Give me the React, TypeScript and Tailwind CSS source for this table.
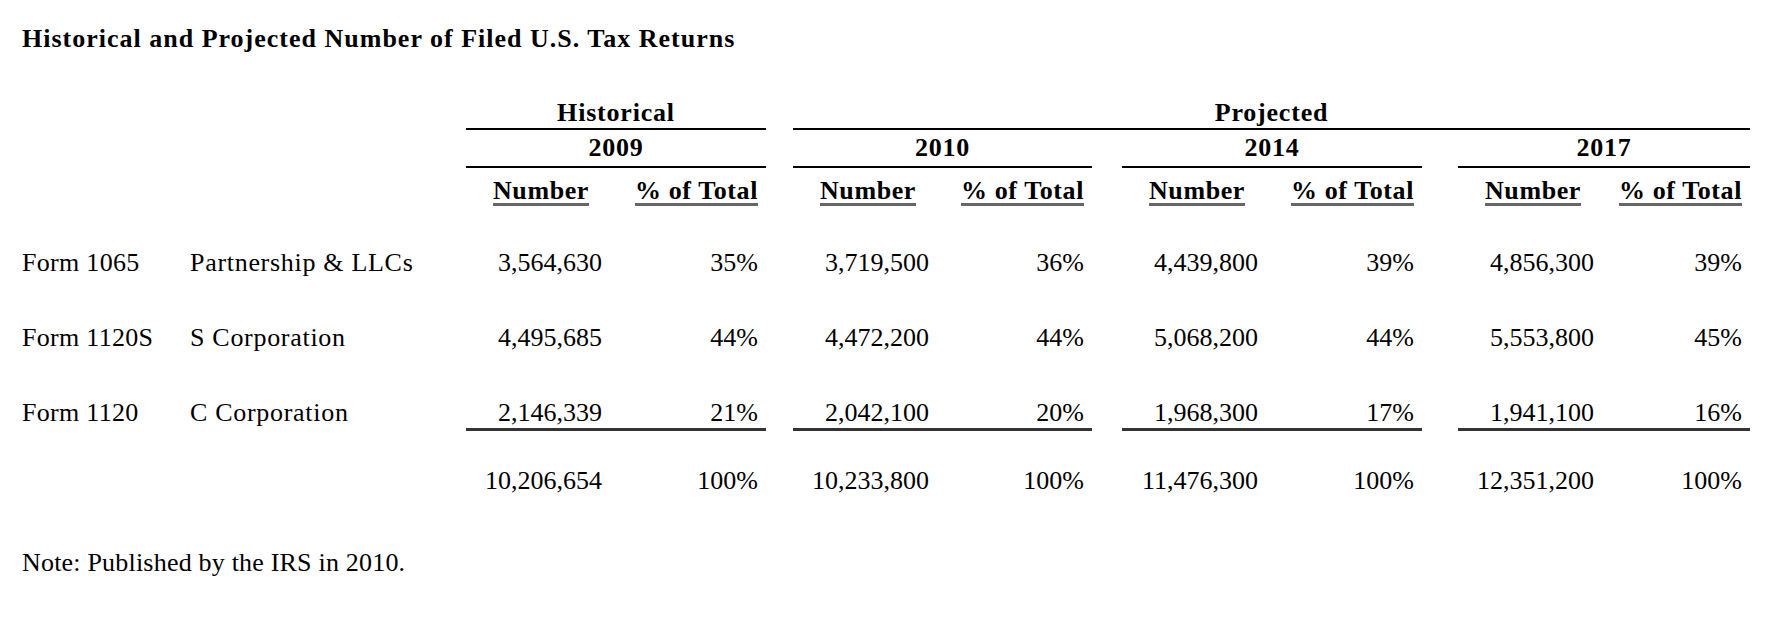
import React from "react";

type Group = {
  year: string;
  width: string;
  margin: string;
  cells: [string, string][];
  total: [string, string];
};

const groups: Group[] = [
  {
    year: "2009",
    width: "w-[300px]",
    margin: "ml-0",
    cells: [
      ["3,564,630", "35%"],
      ["4,495,685", "44%"],
      ["2,146,339", "21%"],
    ],
    total: ["10,206,654", "100%"],
  },
  {
    year: "2010",
    width: "w-[299px]",
    margin: "ml-[27px]",
    cells: [
      ["3,719,500", "36%"],
      ["4,472,200", "44%"],
      ["2,042,100", "20%"],
    ],
    total: ["10,233,800", "100%"],
  },
  {
    year: "2014",
    width: "w-[300px]",
    margin: "ml-[30px]",
    cells: [
      ["4,439,800", "39%"],
      ["5,068,200", "44%"],
      ["1,968,300", "17%"],
    ],
    total: ["11,476,300", "100%"],
  },
  {
    year: "2017",
    width: "w-[292px]",
    margin: "ml-[36px]",
    cells: [
      ["4,856,300", "39%"],
      ["5,553,800", "45%"],
      ["1,941,100", "16%"],
    ],
    total: ["12,351,200", "100%"],
  },
];

const rows = [
  { form: "Form 1065", desc: "Partnership & LLCs" },
  { form: "Form 1120S", desc: "S Corporation" },
  { form: "Form 1120", desc: "C Corporation" },
];

const Cells = ({ g, pair, last }: { g: Group; pair: [string, string]; last?: boolean }) => (
  <div
    className={`${g.width} ${g.margin} flex ${last ? "border-b-[3px] border-[#333]" : ""}`}
  >
    <div className="w-[150px] text-right pr-[14px]">{pair[0]}</div>
    <div className="flex-1 text-right pr-[8px]">{pair[1]}</div>
  </div>
);

export default function App() {
  return (
    <div className="w-[1772px] h-[628px] bg-white text-black font-['Liberation_Serif',serif] text-[26px] leading-[30px]">
      <h1 className="pt-[24px] pl-[22px] font-bold tracking-[1px]">
        Historical and Projected Number of Filed U.S. Tax Returns
      </h1>

      {/* group headers */}
      <div className="flex pl-[466px] mt-[44px] font-bold tracking-[0.8px]">
        <div className="w-[300px] text-center border-b-2 border-black">Historical</div>
        <div className="ml-[27px] w-[957px] text-center border-b-2 border-black">Projected</div>
      </div>

      <div className="flex pl-[466px] mt-[3px] font-bold tracking-[0.8px]">
        {groups.map((g) => (
          <div
            key={g.year}
            className={`${g.width} ${g.margin} text-center pb-[3px] border-b-2 border-black`}
          >
            {g.year}
          </div>
        ))}
      </div>

      <div className="flex pl-[466px] mt-[8px] font-bold tracking-[0.6px]">
        {groups.map((g) => (
          <div key={g.year} className={`${g.width} ${g.margin} flex`}>
            <div className="w-[150px] text-center">
              <span className="inline-block leading-[25px] border-b-[3px] border-[#666]">Number</span>
            </div>
            <div className="flex-1 text-right pr-[8px]">
              <span className="inline-block leading-[25px] border-b-[3px] border-[#666]">% of Total</span>
            </div>
          </div>
        ))}
      </div>

      {/* data */}
      <div className="mt-[42px]">
        {rows.map((r, i) => (
          <div key={r.form} className={`flex ${i > 0 ? "mt-[45px]" : ""}`}>
            <div className="w-[190px] pl-[22px] tracking-[0.3px]">{r.form}</div>
            <div className="w-[276px] tracking-[0.7px]">{r.desc}</div>
            {groups.map((g) => (
              <Cells key={g.year} g={g} pair={g.cells[i]} last={i === 2} />
            ))}
          </div>
        ))}

        <div className="flex mt-[35px]">
          <div className="w-[466px]" />
          {groups.map((g) => (
            <Cells key={g.year} g={g} pair={g.total} />
          ))}
        </div>
      </div>

      <p className="mt-[52px] pl-[22px] tracking-[0.2px]">Note: Published by the IRS in 2010.</p>
    </div>
  );
}
